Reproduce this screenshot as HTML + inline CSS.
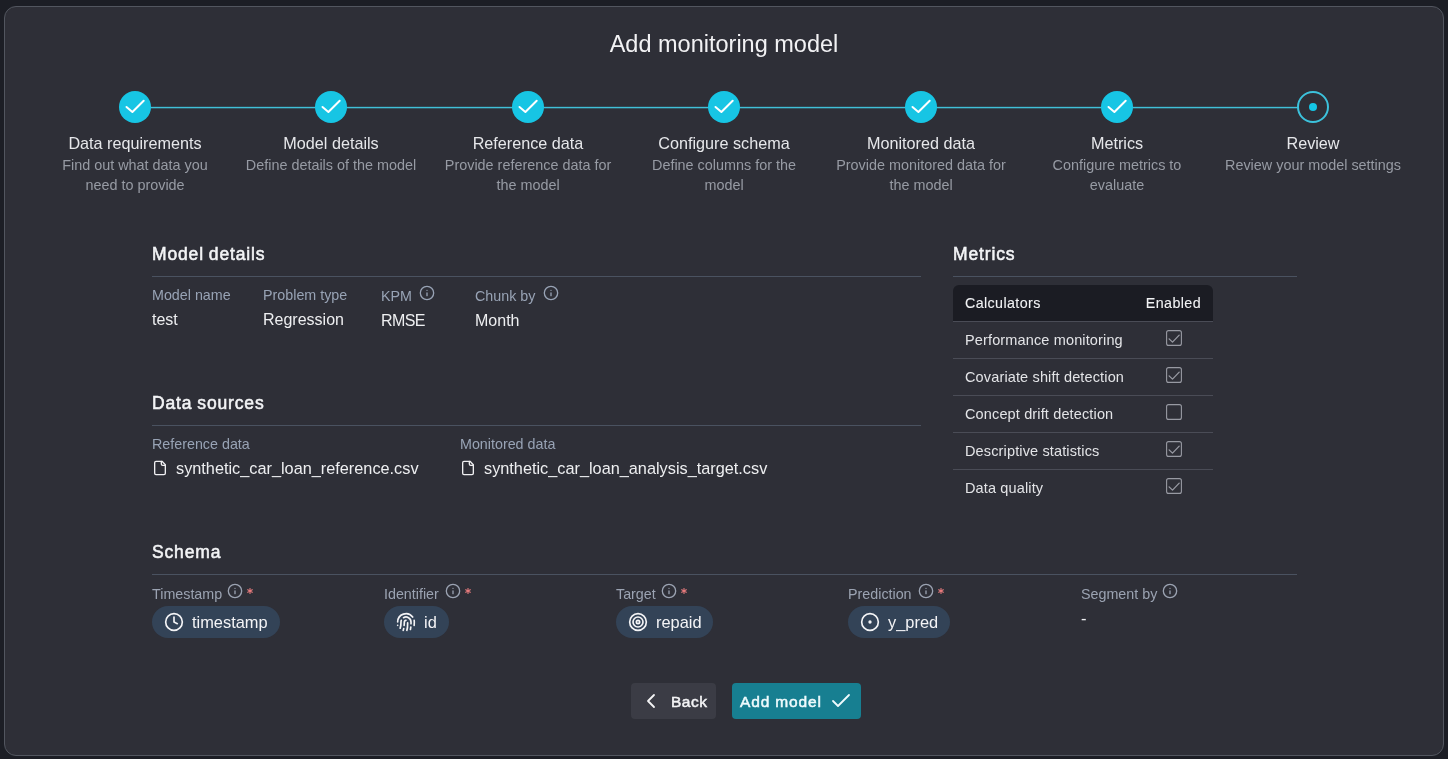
<!DOCTYPE html>
<html><head><meta charset="utf-8">
<style>
*{box-sizing:border-box;margin:0;padding:0}
html,body{width:1448px;height:759px;overflow:hidden;background:#1c1e25;font-family:"Liberation Sans",sans-serif;position:relative}
.modal{position:absolute;left:4px;top:6px;width:1440px;height:750px;background:#2e2f37;border:1px solid #52565f;border-radius:12px;}
.a{position:absolute;white-space:nowrap;will-change:transform}
.line{position:absolute;top:106px;height:3px;background:linear-gradient(to bottom, rgba(60,190,214,0.18) 0 1px, #40c0d8 1px 2px, rgba(60,190,214,0.3) 2px 3px);}
.circ{position:absolute;top:91px;width:32px;height:32px;border-radius:50%;background:#17c5e4;}
.circ svg{position:absolute;left:0;top:0}
.ring{position:absolute;top:91px;width:32px;height:32px;border-radius:50%;border:2.2px solid #3cc2dc;background:#2e2f37}
.ring i{position:absolute;left:10px;top:10px;width:8px;height:8px;border-radius:50%;background:#14c6e6}
.st{color:#e6e7ea;}
.sd{color:#979ba4;}
.h{color:#f3f4f6;letter-spacing:0.85px;word-spacing:-0.8px;-webkit-text-stroke:0.55px #f3f4f6}
.dv{position:absolute;height:1px;background:#4a5260;}
.lab{color:#98a3b5;}
.val{color:#eeeff1;}
</style></head><body>
<div class="modal"></div>
<div class="a " style="left:424.00px;width:600px;text-align:center;top:30.36px;font-size:23.5px;line-height:29px;color:#f2f2f4">Add monitoring model</div>
<div class="line" style="left:134.9px;width:1178.4px"></div>
<div class="circ" style="left:118.9px"><svg width="32" height="32" viewBox="0 0 32 32"><path d="M7.5 16 L13.4 21 L24.7 9.7" fill="none" stroke="#fff" stroke-width="2" stroke-linecap="round" stroke-linejoin="round"/></svg></div>
<div class="a st" style="left:24.90px;width:220px;text-align:center;top:132.89px;font-size:16.2px;line-height:20px;">Data requirements</div>
<div class="a sd" style="left:24.90px;width:220px;text-align:center;top:155.81px;font-size:14.4px;line-height:18px;">Find out what data you</div>
<div class="a sd" style="left:24.90px;width:220px;text-align:center;top:175.91px;font-size:14.4px;line-height:18px;">need to provide</div>
<div class="circ" style="left:315.3px"><svg width="32" height="32" viewBox="0 0 32 32"><path d="M7.5 16 L13.4 21 L24.7 9.7" fill="none" stroke="#fff" stroke-width="2" stroke-linecap="round" stroke-linejoin="round"/></svg></div>
<div class="a st" style="left:221.30px;width:220px;text-align:center;top:132.89px;font-size:16.2px;line-height:20px;">Model details</div>
<div class="a sd" style="left:221.30px;width:220px;text-align:center;top:155.81px;font-size:14.4px;line-height:18px;">Define details of the model</div>
<div class="circ" style="left:511.7px"><svg width="32" height="32" viewBox="0 0 32 32"><path d="M7.5 16 L13.4 21 L24.7 9.7" fill="none" stroke="#fff" stroke-width="2" stroke-linecap="round" stroke-linejoin="round"/></svg></div>
<div class="a st" style="left:417.70px;width:220px;text-align:center;top:132.89px;font-size:16.2px;line-height:20px;">Reference data</div>
<div class="a sd" style="left:417.70px;width:220px;text-align:center;top:155.81px;font-size:14.4px;line-height:18px;">Provide reference data for</div>
<div class="a sd" style="left:417.70px;width:220px;text-align:center;top:175.91px;font-size:14.4px;line-height:18px;">the model</div>
<div class="circ" style="left:708.1px"><svg width="32" height="32" viewBox="0 0 32 32"><path d="M7.5 16 L13.4 21 L24.7 9.7" fill="none" stroke="#fff" stroke-width="2" stroke-linecap="round" stroke-linejoin="round"/></svg></div>
<div class="a st" style="left:614.10px;width:220px;text-align:center;top:132.89px;font-size:16.2px;line-height:20px;">Configure schema</div>
<div class="a sd" style="left:614.10px;width:220px;text-align:center;top:155.81px;font-size:14.4px;line-height:18px;">Define columns for the</div>
<div class="a sd" style="left:614.10px;width:220px;text-align:center;top:175.91px;font-size:14.4px;line-height:18px;">model</div>
<div class="circ" style="left:904.5px"><svg width="32" height="32" viewBox="0 0 32 32"><path d="M7.5 16 L13.4 21 L24.7 9.7" fill="none" stroke="#fff" stroke-width="2" stroke-linecap="round" stroke-linejoin="round"/></svg></div>
<div class="a st" style="left:810.50px;width:220px;text-align:center;top:132.89px;font-size:16.2px;line-height:20px;">Monitored data</div>
<div class="a sd" style="left:810.50px;width:220px;text-align:center;top:155.81px;font-size:14.4px;line-height:18px;">Provide monitored data for</div>
<div class="a sd" style="left:810.50px;width:220px;text-align:center;top:175.91px;font-size:14.4px;line-height:18px;">the model</div>
<div class="circ" style="left:1100.9px"><svg width="32" height="32" viewBox="0 0 32 32"><path d="M7.5 16 L13.4 21 L24.7 9.7" fill="none" stroke="#fff" stroke-width="2" stroke-linecap="round" stroke-linejoin="round"/></svg></div>
<div class="a st" style="left:1006.90px;width:220px;text-align:center;top:132.89px;font-size:16.2px;line-height:20px;">Metrics</div>
<div class="a sd" style="left:1006.90px;width:220px;text-align:center;top:155.81px;font-size:14.4px;line-height:18px;">Configure metrics to</div>
<div class="a sd" style="left:1006.90px;width:220px;text-align:center;top:175.91px;font-size:14.4px;line-height:18px;">evaluate</div>
<div class="ring" style="left:1297.3px"><i></i></div>
<div class="a st" style="left:1203.30px;width:220px;text-align:center;top:132.89px;font-size:16.2px;line-height:20px;">Review</div>
<div class="a sd" style="left:1203.30px;width:220px;text-align:center;top:155.81px;font-size:14.4px;line-height:18px;">Review your model settings</div>
<div class="a h" style="left:151.50px;top:242.94px;font-size:17.5px;line-height:22px;">Model details</div>
<div class="dv" style="left:152px;top:276px;width:769px"></div>
<div class="a lab" style="left:152.00px;top:286.05px;font-size:14.3px;line-height:18px;">Model name</div>
<div class="a val" style="left:152.00px;top:310.46px;font-size:16px;line-height:20px;">test</div>
<div class="a lab" style="left:263.00px;top:286.05px;font-size:14.3px;line-height:18px;">Problem type</div>
<div class="a val" style="left:263.00px;top:310.46px;font-size:16px;line-height:20px;">Regression</div>
<div class="a lab" style="left:381.00px;top:287.05px;font-size:14.3px;line-height:18px;">KPM</div>
<div class="a val" style="left:381.00px;top:311.46px;font-size:16px;line-height:20px;letter-spacing:-0.6px">RMSE</div>
<div class="a lab" style="left:475.00px;top:287.05px;font-size:14.3px;line-height:18px;">Chunk by</div>
<div class="a val" style="left:475.00px;top:311.46px;font-size:16px;line-height:20px;">Month</div>
<svg class="a" style="left:419.00px;top:285.00px" width="16" height="16" viewBox="0 0 24 24" fill="none" stroke="#98a3b5" stroke-width="2" stroke-linecap="round" stroke-linejoin="round"><circle cx="12" cy="12" r="10"/><path d="M12 16v-4"/><path d="M12 8h.01"/></svg>
<svg class="a" style="left:543.00px;top:285.00px" width="16" height="16" viewBox="0 0 24 24" fill="none" stroke="#98a3b5" stroke-width="2" stroke-linecap="round" stroke-linejoin="round"><circle cx="12" cy="12" r="10"/><path d="M12 16v-4"/><path d="M12 8h.01"/></svg>
<div class="a h" style="left:151.50px;top:391.64px;font-size:17.5px;line-height:22px;">Data sources</div>
<div class="dv" style="left:152px;top:425px;width:769px"></div>
<div class="a lab" style="left:152.00px;top:434.65px;font-size:14.3px;line-height:18px;">Reference data</div>
<svg class="a" style="left:152.00px;top:459.80px" width="16" height="16" viewBox="0 0 24 24" fill="none" stroke="#f0f0f2" stroke-width="2" stroke-linecap="round" stroke-linejoin="round"><path d="M15 2H6a2 2 0 0 0-2 2v16a2 2 0 0 0 2 2h12a2 2 0 0 0 2-2V7Z"/><path d="M14 2v4a2 2 0 0 0 2 2h4"/></svg>
<div class="a val" style="left:175.70px;top:457.85px;font-size:16.3px;line-height:20px;">synthetic_car_loan_reference.csv</div>
<div class="a lab" style="left:460.00px;top:434.65px;font-size:14.3px;line-height:18px;">Monitored data</div>
<svg class="a" style="left:460.00px;top:459.80px" width="16" height="16" viewBox="0 0 24 24" fill="none" stroke="#f0f0f2" stroke-width="2" stroke-linecap="round" stroke-linejoin="round"><path d="M15 2H6a2 2 0 0 0-2 2v16a2 2 0 0 0 2 2h12a2 2 0 0 0 2-2V7Z"/><path d="M14 2v4a2 2 0 0 0 2 2h4"/></svg>
<div class="a val" style="left:483.70px;top:457.85px;font-size:16.3px;line-height:20px;">synthetic_car_loan_analysis_target.csv</div>
<div class="a h" style="left:953.00px;top:242.94px;font-size:17.5px;line-height:22px;">Metrics</div>
<div class="dv" style="left:953px;top:276px;width:344px"></div>
<div class="a" style="left:953px;top:285px;width:260px;height:36px;background:#1b1c23;border-radius:6px 6px 0 0"></div>
<div class="a " style="left:965.00px;top:294.05px;font-size:14.3px;line-height:18px;color:#f2f3f5;letter-spacing:0.38px;-webkit-text-stroke:0.08px #f2f3f5">Calculators</div>
<div class="a " style="left:1080.50px;width:120px;text-align:right;top:294.05px;font-size:14.3px;line-height:18px;color:#f2f3f5;letter-spacing:0.38px;-webkit-text-stroke:0.08px #f2f3f5">Enabled</div>
<div class="a" style="left:953px;top:321px;width:260px;height:1px;background:#4a4c56"></div>
<div class="a " style="left:965.00px;top:330.98px;font-size:14.5px;line-height:18px;color:#e3e4e7;letter-spacing:0.14px">Performance monitoring</div>
<svg class="a" style="left:1166px;top:330px" width="16" height="16" viewBox="0 0 16 16"><rect x="0.6" y="0.6" width="14.8" height="14.8" rx="2" fill="none" stroke="#989aa3" stroke-width="1.1"/><path d="M3.1 8.9L6.5 12.1L13.2 5.1" fill="none" stroke="#989aa3" stroke-width="1.3" stroke-linecap="round" stroke-linejoin="round"/></svg><div class="a" style="left:953px;top:358px;width:260px;height:1px;background:#4a4c56"></div>
<div class="a " style="left:965.00px;top:367.98px;font-size:14.5px;line-height:18px;color:#e3e4e7;letter-spacing:0.14px">Covariate shift detection</div>
<svg class="a" style="left:1166px;top:367px" width="16" height="16" viewBox="0 0 16 16"><rect x="0.6" y="0.6" width="14.8" height="14.8" rx="2" fill="none" stroke="#989aa3" stroke-width="1.1"/><path d="M3.1 8.9L6.5 12.1L13.2 5.1" fill="none" stroke="#989aa3" stroke-width="1.3" stroke-linecap="round" stroke-linejoin="round"/></svg><div class="a" style="left:953px;top:395px;width:260px;height:1px;background:#4a4c56"></div>
<div class="a " style="left:965.00px;top:404.98px;font-size:14.5px;line-height:18px;color:#e3e4e7;letter-spacing:0.14px">Concept drift detection</div>
<svg class="a" style="left:1166px;top:404px" width="16" height="16" viewBox="0 0 16 16"><rect x="0.6" y="0.6" width="14.8" height="14.8" rx="2" fill="none" stroke="#989aa3" stroke-width="1.1"/></svg><div class="a" style="left:953px;top:432px;width:260px;height:1px;background:#4a4c56"></div>
<div class="a " style="left:965.00px;top:441.98px;font-size:14.5px;line-height:18px;color:#e3e4e7;letter-spacing:0.14px">Descriptive statistics</div>
<svg class="a" style="left:1166px;top:441px" width="16" height="16" viewBox="0 0 16 16"><rect x="0.6" y="0.6" width="14.8" height="14.8" rx="2" fill="none" stroke="#989aa3" stroke-width="1.1"/><path d="M3.1 8.9L6.5 12.1L13.2 5.1" fill="none" stroke="#989aa3" stroke-width="1.3" stroke-linecap="round" stroke-linejoin="round"/></svg><div class="a" style="left:953px;top:469px;width:260px;height:1px;background:#4a4c56"></div>
<div class="a " style="left:965.00px;top:478.98px;font-size:14.5px;line-height:18px;color:#e3e4e7;letter-spacing:0.14px">Data quality</div>
<svg class="a" style="left:1166px;top:478px" width="16" height="16" viewBox="0 0 16 16"><rect x="0.6" y="0.6" width="14.8" height="14.8" rx="2" fill="none" stroke="#989aa3" stroke-width="1.1"/><path d="M3.1 8.9L6.5 12.1L13.2 5.1" fill="none" stroke="#989aa3" stroke-width="1.3" stroke-linecap="round" stroke-linejoin="round"/></svg><div class="a h" style="left:151.50px;top:540.94px;font-size:17.5px;line-height:22px;">Schema</div>
<div class="dv" style="left:152px;top:574px;width:1145px"></div>
<div class="a lab" style="left:152.00px;top:585.05px;font-size:14.3px;line-height:18px;color:#9ba3b2">Timestamp</div>
<svg class="a" style="left:227.00px;top:583.00px" width="16" height="16" viewBox="0 0 24 24" fill="none" stroke="#9ba3b2" stroke-width="2" stroke-linecap="round" stroke-linejoin="round"><circle cx="12" cy="12" r="10"/><path d="M12 16v-4"/><path d="M12 8h.01"/></svg>
<svg class="a" style="left:247.30px;top:588.4px" width="6" height="6" viewBox="0 0 6 6" fill="none" stroke="#e67a7c" stroke-width="1.1" stroke-linecap="round"><path d="M3 0.4v5.2M0.75 1.7l4.5 2.6M0.75 4.3l4.5-2.6"/></svg>
<div class="a" style="left:152.0px;top:606px;width:128px;height:32px;border-radius:16px;background:#334357"></div>
<svg class="a" style="left:164.00px;top:612.00px" width="20" height="20" viewBox="0 0 24 24" fill="none" stroke="#f4f4f6" stroke-width="2" stroke-linecap="round" stroke-linejoin="round"><circle cx="12" cy="12" r="10"/><polyline points="12 6 12 12 16 14"/></svg>
<div class="a val" style="left:192.00px;top:611.92px;font-size:16.4px;line-height:20px;color:#f4f4f6">timestamp</div>
<div class="a lab" style="left:384.00px;top:585.05px;font-size:14.3px;line-height:18px;color:#9ba3b2">Identifier</div>
<svg class="a" style="left:444.60px;top:583.00px" width="16" height="16" viewBox="0 0 24 24" fill="none" stroke="#9ba3b2" stroke-width="2" stroke-linecap="round" stroke-linejoin="round"><circle cx="12" cy="12" r="10"/><path d="M12 16v-4"/><path d="M12 8h.01"/></svg>
<svg class="a" style="left:465.00px;top:588.4px" width="6" height="6" viewBox="0 0 6 6" fill="none" stroke="#e67a7c" stroke-width="1.1" stroke-linecap="round"><path d="M3 0.4v5.2M0.75 1.7l4.5 2.6M0.75 4.3l4.5-2.6"/></svg>
<div class="a" style="left:384.0px;top:606px;width:65px;height:32px;border-radius:16px;background:#334357"></div>
<svg class="a" style="left:396.00px;top:612.00px" width="20" height="20" viewBox="0 0 24 24" fill="none" stroke="#f4f4f6" stroke-width="2" stroke-linecap="round" stroke-linejoin="round"><path d="M12 10a2 2 0 0 0-2 2c0 1.02-.1 2.51-.26 4"/><path d="M14 13.12c0 2.38 0 6.38-1 8.88"/><path d="M17.29 21.02c.12-.6.43-2.3.5-3.02"/><path d="M2 12a10 10 0 0 1 18-6"/><path d="M2 16h.01"/><path d="M21.8 16c.2-2 .131-5.354 0-6"/><path d="M5 19.5C5.5 18 6 15 6 12a6 6 0 0 1 .34-2"/><path d="M8.65 22c.21-.66.45-1.32.57-2"/><path d="M9 6.8a6 6 0 0 1 9 5.2v2"/></svg>
<div class="a val" style="left:424.00px;top:611.92px;font-size:16.4px;line-height:20px;color:#f4f4f6">id</div>
<div class="a lab" style="left:616.00px;top:585.05px;font-size:14.3px;line-height:18px;color:#9ba3b2">Target</div>
<svg class="a" style="left:661.20px;top:583.00px" width="16" height="16" viewBox="0 0 24 24" fill="none" stroke="#9ba3b2" stroke-width="2" stroke-linecap="round" stroke-linejoin="round"><circle cx="12" cy="12" r="10"/><path d="M12 16v-4"/><path d="M12 8h.01"/></svg>
<svg class="a" style="left:680.70px;top:588.4px" width="6" height="6" viewBox="0 0 6 6" fill="none" stroke="#e67a7c" stroke-width="1.1" stroke-linecap="round"><path d="M3 0.4v5.2M0.75 1.7l4.5 2.6M0.75 4.3l4.5-2.6"/></svg>
<div class="a" style="left:615.8px;top:606px;width:96.5px;height:32px;border-radius:16px;background:#334357"></div>
<svg class="a" style="left:627.80px;top:612.00px" width="20" height="20" viewBox="0 0 24 24" fill="none" stroke="#f4f4f6" stroke-width="2" stroke-linecap="round" stroke-linejoin="round"><circle cx="12" cy="12" r="10"/><circle cx="12" cy="12" r="6"/><circle cx="12" cy="12" r="2"/></svg>
<div class="a val" style="left:655.80px;top:611.92px;font-size:16.4px;line-height:20px;color:#f4f4f6">repaid</div>
<div class="a lab" style="left:848.00px;top:585.05px;font-size:14.3px;line-height:18px;color:#9ba3b2">Prediction</div>
<svg class="a" style="left:918.00px;top:583.00px" width="16" height="16" viewBox="0 0 24 24" fill="none" stroke="#9ba3b2" stroke-width="2" stroke-linecap="round" stroke-linejoin="round"><circle cx="12" cy="12" r="10"/><path d="M12 16v-4"/><path d="M12 8h.01"/></svg>
<svg class="a" style="left:937.60px;top:588.4px" width="6" height="6" viewBox="0 0 6 6" fill="none" stroke="#e67a7c" stroke-width="1.1" stroke-linecap="round"><path d="M3 0.4v5.2M0.75 1.7l4.5 2.6M0.75 4.3l4.5-2.6"/></svg>
<div class="a" style="left:847.8px;top:606px;width:102px;height:32px;border-radius:16px;background:#334357"></div>
<svg class="a" style="left:859.80px;top:612.00px" width="20" height="20" viewBox="0 0 24 24" fill="none" stroke="#f4f4f6" stroke-width="2" stroke-linecap="round" stroke-linejoin="round"><circle cx="12" cy="12" r="10"/><circle cx="12" cy="12" r="1"/></svg>
<div class="a val" style="left:887.80px;top:611.92px;font-size:16.4px;line-height:20px;color:#f4f4f6">y_pred</div>
<div class="a lab" style="left:1080.50px;top:585.05px;font-size:14.3px;line-height:18px;color:#9ba3b2">Segment by</div>
<svg class="a" style="left:1162.00px;top:583.00px" width="16" height="16" viewBox="0 0 24 24" fill="none" stroke="#9ba3b2" stroke-width="2" stroke-linecap="round" stroke-linejoin="round"><circle cx="12" cy="12" r="10"/><path d="M12 16v-4"/><path d="M12 8h.01"/></svg>
<div class="a val" style="left:1081.00px;top:607.78px;font-size:16.5px;line-height:21px;">-</div>
<div class="a" style="left:631px;top:683px;width:85px;height:36px;border-radius:4px;background:#3b3c45"></div>
<svg class="a" style="left:639.00px;top:689.00px" width="24" height="24" viewBox="0 0 24 24" fill="none" stroke="#f4f4f6" stroke-width="1.8" stroke-linecap="round" stroke-linejoin="round"><path d="m15 18-6-6 6-6"/></svg>
<div class="a " style="left:671.00px;top:691.73px;font-size:15.5px;line-height:19px;color:#f4f4f6;letter-spacing:0.5px;-webkit-text-stroke:0.5px #f4f4f6">Back</div>
<div class="a" style="left:732px;top:683px;width:129px;height:36px;border-radius:4px;background:#177f91"></div>
<div class="a " style="left:740.00px;top:691.73px;font-size:15.5px;line-height:19px;color:#effbfd;letter-spacing:0.85px;-webkit-text-stroke:0.5px #effbfd">Add model</div>
<svg class="a" style="left:829.00px;top:688.50px" width="24" height="24" viewBox="0 0 24 24" fill="none" stroke="#effbfd" stroke-width="1.8" stroke-linecap="round" stroke-linejoin="round"><path d="M20 6 9 17l-5-5"/></svg>
</body></html>
